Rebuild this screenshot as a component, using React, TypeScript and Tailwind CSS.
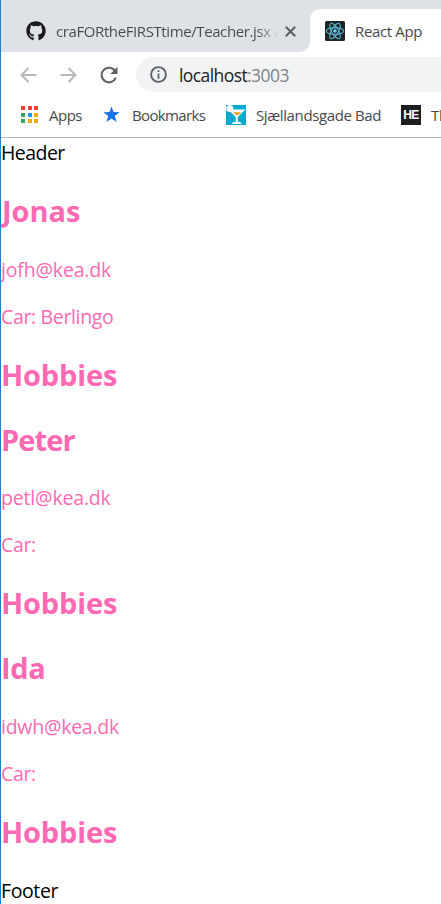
import React from "react";
import { FaGithub } from "react-icons/fa";

const teachers = [
  { name: "Jonas", mail: "jofh@kea.dk", car: "Berlingo", nameTracking: "pl-px tracking-[-0.05px]", mailTracking: "tracking-[-0.17px]" },
  { name: "Peter", mail: "petl@kea.dk", car: "", nameTracking: "tracking-[-0.9px]", mailTracking: "tracking-[-0.17px]" },
  { name: "Ida", mail: "idwh@kea.dk", car: "", nameTracking: "tracking-[-0.3px]", mailTracking: "tracking-[-0.25px]" },
];

const appColors = ["#f44336", "#f44336", "#f44336", "#34a853", "#2196f3", "#fbab00", "#34a853", "#fbab00", "#fbab00"];

function ReactIcon() {
  return (
    <svg className="block h-5 w-5 shrink-0" viewBox="0 0 20 20">
      <rect width="20" height="20" rx="1.5" fill="#222222" />
      <g fill="none" stroke="#53b9d8" strokeWidth="1.05">
        <ellipse cx="10" cy="10" rx="8.7" ry="3.4" />
        <ellipse cx="10" cy="10" rx="8.7" ry="3.4" transform="rotate(60 10 10)" />
        <ellipse cx="10" cy="10" rx="8.7" ry="3.4" transform="rotate(120 10 10)" />
      </g>
      <circle cx="10" cy="10" r="1.8" fill="#61dafb" />
    </svg>
  );
}

function TabStrip() {
  return (
    <div className="flex h-[52px] items-stretch bg-[#dee1e6]">
      <div className="flex w-[299px] shrink-0 items-center pt-[10px] pl-[25px]">
        <FaGithub className="h-5 w-5 shrink-0 text-[#1b1a1e]" />
        <div className="ml-[10px] w-[223px] overflow-hidden bg-linear-to-r from-[#45494d] from-90% to-transparent bg-clip-text text-[15px] leading-5 tracking-[-0.4px] whitespace-nowrap text-transparent">
          craFORtheFIRSTtime/Teacher.jsx at
        </div>
        <svg className="ml-[6px] h-[11px] w-[11px] shrink-0" viewBox="0 0 11 11" fill="none" stroke="#5a5e63" strokeWidth="2">
          <path d="M.8.8l9.4 9.4M10.2.8L.8 10.2" />
        </svg>
      </div>
      <svg className="mt-[42px] h-[10px] w-[10px] shrink-0" viewBox="0 0 10 10">
        <path d="M10 0V10H0A10 10 0 0 0 10 0Z" fill="#fff" />
      </svg>
      <div className="mt-[9px] flex grow items-center rounded-tl-[10px] bg-white pl-[15px]">
        <ReactIcon />
        <span className="ml-[10px] text-[15px] leading-5 tracking-[-0.35px] text-[#45494d]">React App</span>
      </div>
    </div>
  );
}

function Toolbar() {
  return (
    <div className="flex h-[45px] items-center">
      <svg className="ml-[19px] h-4 w-[17px]" viewBox="0 0 17 16" fill="none" stroke="#b5b7b9" strokeWidth="2">
        <path d="M16.5 8H1.5M8.5 1L1.5 8l7 7" />
      </svg>
      <svg className="ml-[23px] h-4 w-[17px]" viewBox="0 0 17 16" fill="none" stroke="#b5b7b9" strokeWidth="2">
        <path d="M.5 8h15M8.5 1l7 7-7 7" />
      </svg>
      <svg className="ml-[23px] h-[18px] w-[18px]" viewBox="0 0 18 18">
        <path d="M15.2 5.2A7.3 7.3 0 1 0 15.8 11.7" fill="none" stroke="#5f6368" strokeWidth="2.1" />
        <path d="M17.5 .8V8H10.3Z" fill="#5f6368" />
      </svg>
      <div className="ml-[18px] flex h-[35px] grow items-center rounded-l-full bg-[#f1f3f4] pl-[14px]">
        <svg className="h-[17px] w-[17px]" viewBox="0 0 17 17">
          <circle cx="8.5" cy="8.5" r="7.4" fill="none" stroke="#5f6368" strokeWidth="1.9" />
          <path d="M7.6 4.2h1.8v1.9H7.6zM7.6 7.4h1.8v5.3H7.6z" fill="#5f6368" />
        </svg>
        <span className="ml-[12px] text-[17.5px] leading-6 tracking-[-0.58px] text-[#202124]">
          localhost<span className="text-[#808488]">:3003</span>
        </span>
      </div>
    </div>
  );
}

function BookmarkBar() {
  return (
    <div className="flex h-[41px] items-center overflow-hidden border-b border-[#b4b5b6] pb-[5px] text-[15px] leading-5 whitespace-nowrap text-[#45494d]">
      <div className="ml-[20px] grid shrink-0 grid-cols-3 gap-[2.5px]">
        {appColors.map((color, i) => (
          <span key={i} className="h-[4px] w-[4px]" style={{ backgroundColor: color }} />
        ))}
      </div>
      <span className="ml-[11px] w-[33px] shrink-0 tracking-[-0.5px]">Apps</span>
      <svg className="ml-[21px] h-[17px] w-[17px] shrink-0" viewBox="0 0 17 17">
        <path d="M8.5 .4l2.1 5.7 6 .2-4.8 3.7 1.8 6-5.1-3.5L3.4 16l1.8-6L.4 6.3l6-.2z" fill="#1a73e8" />
      </svg>
      <span className="ml-[12px] w-[74px] shrink-0 tracking-[-0.65px]">Bookmarks</span>
      <svg className="ml-[20px] h-5 w-5 shrink-0" viewBox="0 0 20 20">
        <rect width="20" height="20" fill="#08acd0" />
        <circle cx="3.8" cy="3.5" r="3.5" fill="#fff" />
        <path d="M2 4.6h17.4l-7.6 7.3v4.6l3.6 1.2V19H6.2v-1.3l3.6-1.2v-4.6z" fill="#fff" />
        <path d="M7.2 7.2h8.2L12.4 9.9H10z" fill="#f29b23" />
      </svg>
      <span className="ml-[10px] w-[125px] shrink-0 tracking-[-0.38px]">Sjællandsgade Bad</span>
      <div className="ml-[20px] flex h-5 w-5 shrink-0 items-center justify-center bg-[#1d1d22] font-['Liberation_Sans',sans-serif] text-[12px] font-bold tracking-[-0.5px] text-white">
        HE
      </div>
      <span className="ml-[10px] shrink-0 tracking-[-0.3px]">Th</span>
    </div>
  );
}

export default function App() {
  return (
    <div className="h-[904px] w-[441px] overflow-hidden border-l border-[#1883d7] bg-white font-['Open_Sans','Noto_Sans',sans-serif]">
      <TabStrip />
      <Toolbar />
      <BookmarkBar />
      <main className="pt-px text-[19.5px] leading-[27px] text-black">
        <div className="tracking-[-0.55px]">Header</div>
        {teachers.map((t) => (
          <section key={t.name} className="text-[#ff69b4]">
            <h2 className={`mt-[24.9px] text-[29px] leading-10 font-bold ${t.nameTracking}`}>{t.name}</h2>
            <p className={`mt-[24.9px] ${t.mailTracking}`}>{t.mail}</p>
            <p className="mt-5 tracking-[-0.35px]">Car: {t.car}</p>
            <h2 className="mt-[24.9px] text-[29px] leading-10 font-bold tracking-[-0.15px]">Hobbies</h2>
          </section>
        ))}
        <div className="mt-[24.9px] tracking-[-0.4px]">Footer</div>
      </main>
    </div>
  );
}
